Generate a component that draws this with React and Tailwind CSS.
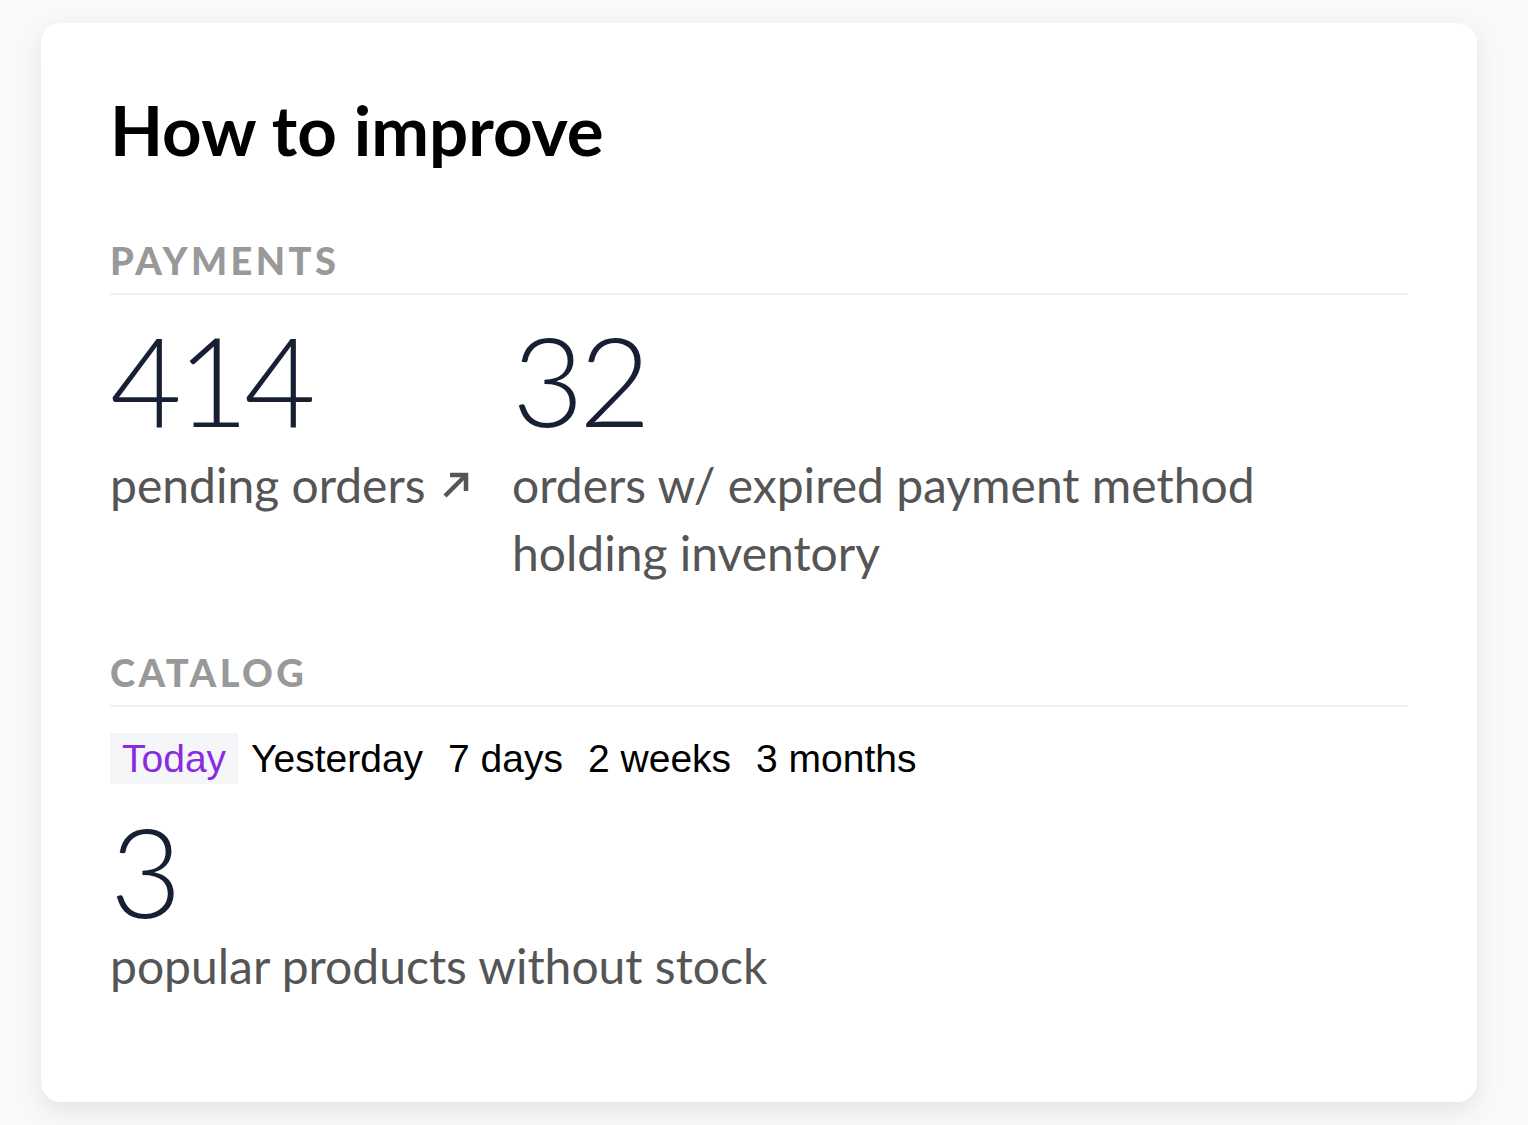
import React, { useState } from "react";

const ranges = ["Today", "Yesterday", "7 days", "2 weeks", "3 months"];

const SectionTitle = ({ children }) => (
  <div className="border-b-2 border-[#f0f1f2] pb-[14px] text-[38px] font-black leading-none tracking-[0.09em] text-[#999999]">
    {children}
  </div>
);

const Stat = ({ value, children, className = "" }) => (
  <div className={className}>
    <div className="text-[124px] font-light leading-none tracking-[-0.04em] text-[#172033]">{value}</div>
    <div className="mt-[10px] text-[48px] leading-[68px] text-[#555555]">{children}</div>
  </div>
);

// north-east arrow next to "pending orders"
const ArrowNE = () => (
  <svg width="28" height="28" viewBox="0 0 28 28" fill="none" stroke="currentColor" strokeWidth="4.5" strokeLinecap="butt">
    <path d="M3 25 L23 5" />
    <path d="M8 4 H24 V20" />
  </svg>
);

export default function App() {
  const [range, setRange] = useState("Today");

  return (
    <div className="min-h-[1125px] bg-[#f8f9fa] pt-[23px] pl-[41px] font-['Lato',sans-serif]">
      <div className="w-[1436px] rounded-[20px] bg-white px-[69px] pt-[72px] pb-[102px] shadow-[0_8px_24px_rgba(0,0,0,0.09)]">
        <h1 className="text-[69px] font-bold leading-none text-black">How to improve</h1>

        <div className="mt-[77px]">
          <SectionTitle>PAYMENTS</SectionTitle>
          <div className="mt-[22px] flex">
            <Stat value="414" className="w-[402px] shrink-0">
              <span className="inline-flex items-center gap-[16px]">
                pending orders
                <ArrowNE />
              </span>
            </Stat>
            <Stat value="32" className="max-w-[820px]">
              orders w/ expired payment method holding inventory
            </Stat>
          </div>
        </div>

        <div className="mt-[66px]">
          <SectionTitle>CATALOG</SectionTitle>
          <div className="mt-[26px] flex gap-[1px] font-['Liberation_Sans',Arial,sans-serif] text-[39px] leading-[45px]">
            {ranges.map((r) => (
              <button
                key={r}
                onClick={() => setRange(r)}
                className={
                  r === range
                    ? "bg-[#f5f6f8] px-[12px] py-[3px] text-[#8a2be2]"
                    : "px-[12px] py-[3px] text-black"
                }
              >
                {r}
              </button>
            ))}
          </div>
          <div className="mt-[24px]">
            <div className="text-[124px] font-light leading-none text-[#172033]">3</div>
            <div className="mt-0 text-[48px] leading-[68px] text-[#555555]">
              popular products without stock
            </div>
          </div>
        </div>
      </div>
    </div>
  );
}
